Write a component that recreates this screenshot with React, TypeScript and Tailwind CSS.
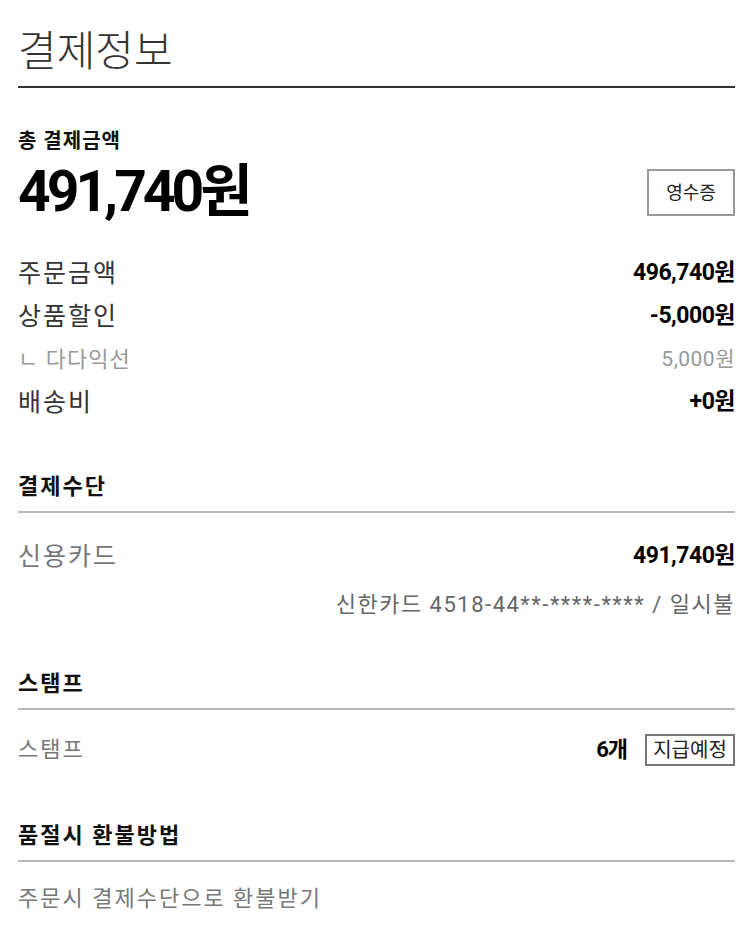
const font = { fontFamily: 'Roboto, "Noto Sans CJK KR", sans-serif' }

function Row({ label, value, muted }: { label: string; value: string; muted?: boolean }) {
  return (
    <div className="flex h-[43px] items-center justify-between">
      <span
        className={
          muted ? 'text-[22px] tracking-[1px] text-[#999]' : 'text-[25px] tracking-[2px] text-[#333]'
        }
      >
        {label}
      </span>
      <span
        className={
          muted
            ? 'text-[21px] tracking-[0.5px] text-[#999]'
            : 'text-[23px] font-bold tracking-[-0.5px] text-black'
        }
      >
        {value}
      </span>
    </div>
  )
}

function Heading({ children }: { children: string }) {
  return (
    <div className="border-b-2 border-[#b8b8b8] pb-[9px] text-[22px] leading-[30px] font-bold tracking-[2px] text-[#111]">
      {children}
    </div>
  )
}

export default function App() {
  return (
    <div className="min-h-screen bg-white pt-[26px] pr-[15px] pl-[18px]" style={font}>
      <h1 className="border-b-2 border-[#333] pb-[8px] text-[42px] leading-[52px] font-light text-[#333]">
        결제정보
      </h1>

      <div className="pt-[38px]">
        <div className="text-[20px] leading-[30px] font-bold tracking-[1px] text-[#111]">총 결제금액</div>
        <div className="mt-[6px] flex items-center justify-between">
          <span className="text-[57px] leading-[60px] font-bold tracking-[-4px] text-black">491,740원</span>
          <button className="h-[47px] w-[88px] border-2 border-[#999] text-[18px] text-[#222]">영수증</button>
        </div>
      </div>

      <div className="mt-[30px]">
        <Row label="주문금액" value="496,740원" />
        <Row label="상품할인" value="-5,000원" />
        <Row label="ㄴ 다다익선" value="5,000원" muted />
        <Row label="배송비" value="+0원" />
      </div>

      <div className="mt-[48px]">
        <Heading>결제수단</Heading>
        <div className="pt-[22px]">
          <div className="flex h-[43px] items-center justify-between">
            <span className="text-[25px] tracking-[2px] text-[#777]">신용카드</span>
            <span className="text-[23px] font-bold tracking-[-0.5px] text-black">491,740원</span>
          </div>
          <div className="mt-[4px] flex h-[44px] items-center justify-end text-[22px] tracking-[1.5px] text-[#666]">
            신한카드 4518-44**-****-**** / 일시불
          </div>
        </div>
      </div>

      <div className="mt-[43px]">
        <Heading>스탬프</Heading>
        <div className="mt-[18px] flex h-[43px] items-center justify-between">
          <span className="text-[22px] tracking-[2px] text-[#777]">스탬프</span>
          <div className="flex items-center gap-[18px]">
            <span className="text-[22px] font-bold tracking-[-1px] text-black">6개</span>
            <span className="flex h-[32px] w-[90px] items-center justify-center border-2 border-[#777] text-[20px] text-[#222]">
              지급예정
            </span>
          </div>
        </div>
      </div>

      <div className="mt-[50px]">
        <Heading>품절시 환불방법</Heading>
        <div className="pt-[22px] text-[22px] leading-[30px] tracking-[2px] text-[#777]">
          주문시 결제수단으로 환불받기
        </div>
      </div>
    </div>
  )
}
